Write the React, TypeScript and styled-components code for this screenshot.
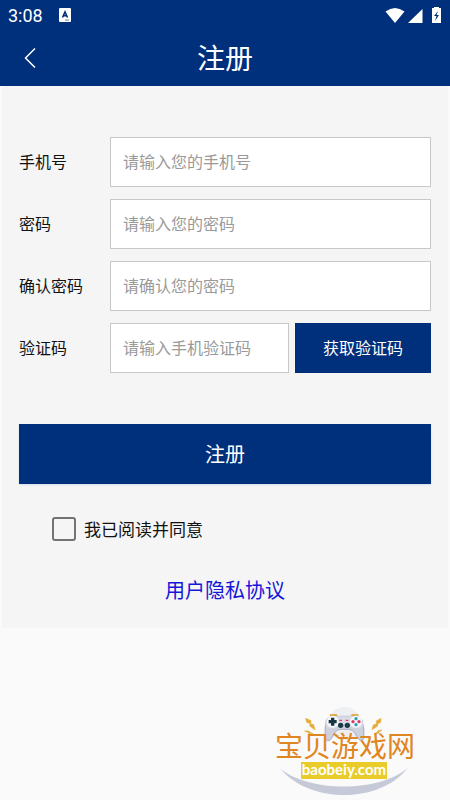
import React, { useState } from "react";
import styled, { createGlobalStyle } from "styled-components";

const navy = "#002f7b";

const GlobalStyle = createGlobalStyle`
  *, *::before, *::after { box-sizing: border-box; }
  body {
    margin: 0;
    background: #fafafa;
    color: #111;
    font-family: Roboto, "Noto Sans CJK SC", sans-serif;
  }
  button, input { font: inherit; border-radius: 0; }
`;

const Page = styled.div`
  min-height: 100vh;
  display: flex;
  flex-direction: column;
`;

const Header = styled.header`
  background: ${navy};
  color: #fff;
`;

const StatusBar = styled.div`
  display: flex;
  align-items: center;
  height: 32px;
  padding: 0 8px;
  font-size: 18px;
  line-height: 32px;
`;

const StatusApp = styled.svg`
  margin: 0 0 2px 16px;
`;

const StatusIcons = styled.svg`
  margin-left: auto;
`;

const TitleBar = styled.div`
  display: grid;
  grid-template-columns: 60px 1fr 60px;
  align-items: start;
  height: 54px;
`;

const BackButton = styled.button`
  display: flex;
  align-items: center;
  justify-content: center;
  height: 52px;
  padding: 0;
  border: 0;
  background: none;
  color: inherit;
`;

const Title = styled.h1`
  margin: 0;
  font-size: 28px;
  line-height: 56px;
  font-weight: 400;
  text-align: center;
`;

const Form = styled.form`
  display: flex;
  flex-direction: column;
  margin: 0 2px;
  padding: 50px 17px 22px;
  background: #f5f5f5;
`;

const Fields = styled.div`
  display: flex;
  flex-direction: column;
  gap: 12px;
  padding-top: 1px;
`;

const FieldRow = styled.div`
  display: flex;
  align-items: center;
`;

const Label = styled.label`
  flex: 0 0 91px;
  padding-bottom: 2px;
  font-size: 16px;
`;

const TextInput = styled.input`
  flex: 1;
  min-width: 0;
  height: 50px;
  padding: 0 12px;
  border: 1px solid #c8c8c8;
  background: #fff;
  font-size: 16px;
  outline: none;
  &::placeholder { color: #9a9a9a; opacity: 1; }
`;

const ActionButton = styled.button<{ $kind: "code" | "submit" }>`
  border: 0;
  padding: 0 0 2px;
  background: ${navy};
  color: #fff;
  ${({ $kind }) =>
    $kind === "code"
      ? "flex: 0 0 136px; height: 50px; margin-left: 6px; font-size: 16px;"
      : "height: 60px; margin-top: 51px; font-size: 20px; box-shadow: 0 1px 2px #d4dcea;"}
`;

const Agreement = styled.label`
  display: flex;
  align-items: center;
  gap: 8px;
  align-self: flex-start;
  height: 24px;
  margin: 33px 0 0 33px;
  font-size: 17px;
`;

const AgreementText = styled.span`
  padding-bottom: 2px;
`;

const CheckBox = styled.input`
  appearance: none;
  width: 24px;
  height: 24px;
  margin: 0;
  border: 2px solid #737373;
  border-radius: 3px;
  &:checked { background: ${navy}; }
`;

const PolicyLink = styled.a`
  align-self: center;
  margin-top: 35px;
  color: #1616d8;
  font-size: 20px;
  line-height: 30px;
  text-decoration: none;
`;

const Brand = styled.footer`
  display: grid;
  width: 160px;
  height: 105px;
  margin: auto 25px 0 auto;
  > * { grid-area: 1 / 1; }
`;

const BrandText = styled.div`
  display: flex;
  flex-direction: column;
  align-items: center;
  padding-top: 39px;
  color: #df8521;
`;

const BrandName = styled.span`
  font-size: 28px;
  line-height: 28px;
  font-weight: 400;
  white-space: nowrap;
`;

const BrandDomain = styled.span`
  width: 86px;
  height: 17px;
  margin-right: 2px;
  background: #e9cc29;
  color: #fff;
  font-family: Lato, "Noto Sans", sans-serif;
  font-size: 15px;
  font-weight: 700;
  line-height: 15px;
  text-align: center;
`;

const fields = [
  { id: "phone", label: "手机号", hint: "请输入您的手机号", type: "tel" },
  { id: "password", label: "密码", hint: "请输入您的密码", type: "password" },
  { id: "confirm", label: "确认密码", hint: "请确认您的密码", type: "password" },
  { id: "code", label: "验证码", hint: "请输入手机验证码", type: "text" },
];

function BrandDrawing() {
  return (
    <svg width="160" height="105" viewBox="0 0 480 315" aria-hidden="true">
      <circle cx="239" cy="86" r="50" fill="#eeeff1" />
      <path d="M46 221C130 290 340 295 428 219C385 274 312 300 240 300C166 300 93 276 46 221Z" fill="#c6c9d8" />
      <path d="M195 57h21v10h-21zM259 57h21v10h-21z" fill="#e5ad48" />
      <path d="M184 75Q193 62 216 64H260Q283 62 291 76Q300 106 296 132Q286 144 275 124Q268 105 251 103H226Q209 105 203 125Q191 144 183 134Q177 109 184 75Z" fill="#cdd0dd" stroke="#a7abbd" strokeWidth="3" />
      <path d="M184 75Q193 62 216 64H260Q283 62 291 76Q296 92 291 96Q279 105 261 97H216Q197 105 184 96Q179 87 184 75Z" fill="#d9dce7" />
      <circle cx="203" cy="80" r="18" fill="#f6f7fa" />
      <circle cx="273" cy="80" r="18" fill="#f6f7fa" />
      <path d="M198 68h10v7h7v10h-7v7h-10v-7h-7v-10h7z" fill="#173744" />
      <circle cx="273" cy="71" r="5" fill="#299fbf" />
      <circle cx="264" cy="80" r="5" fill="#d83d67" />
      <circle cx="282" cy="80" r="5" fill="#d83d67" />
      <circle cx="273" cy="89" r="5" fill="#299fbf" />
      <path d="M223 76h8M242 76h8" stroke="#df3d63" strokeWidth="4" />
      <circle cx="227" cy="91" r="8" fill="#183b48" />
      <circle cx="247" cy="91" r="8" fill="#183b48" />
      <g fill="#e5ac3b" stroke="#e5ac3b" strokeWidth="2" strokeLinejoin="round">
        <path d="M122 70L138 77L137 86L146 89L150 104L134 93L136 86L125 82Z" />
        <path d="M348 70L334 78L334 87L325 90L321 104L338 93L338 87L347 82Z" />
        <path d="M119 108L132 108L135 112L145 117L131 115L128 112Z" />
        <path d="M351 105L339 107L337 111L327 117L341 114L343 110Z" />
      </g>
    </svg>
  );
}

export default function App() {
  const [accepted, setAccepted] = useState(false);

  return (
    <Page>
      <GlobalStyle />
      <Header>
        <StatusBar>
          <span>3:08</span>
          <StatusApp width="12" height="14" viewBox="0 0 12 14" aria-hidden="true">
            <rect width="12" height="14" rx="1" fill="#fff" />
            <path d="M3.5 9.5L6 4L8.5 9.5M4.5 7.8H7.5" fill="none" stroke={navy} strokeWidth="1.6" />
            <path d="M6 12h4" stroke={navy} strokeWidth="0.6" />
          </StatusApp>
          <StatusIcons width="57" height="18" viewBox="0 0 57 18" fill="#fff" aria-hidden="true">
            <path d="M0.5 4.5Q10 -2.5 19.5 4.5L10 16Z" />
            <path d="M23 16L37.5 2V16Z" />
            <path d="M47 1h2V0h5v1h2v15h-9z" />
            <path d="M53 4L49 9h2.5l-1.5 5 4-6h-2.5z" fill={navy} />
          </StatusIcons>
        </StatusBar>
        <TitleBar>
          <BackButton type="button" aria-label="返回">
            <svg width="12" height="20" viewBox="0 0 12 20" fill="none" stroke="currentColor" strokeWidth="1.5">
              <path d="M11 0.5L1.5 10L11 19.5" />
            </svg>
          </BackButton>
          <Title>注册</Title>
        </TitleBar>
      </Header>

      <Form onSubmit={(event) => event.preventDefault()}>
        <Fields>
          {fields.map(({ id, label, hint, type }) => (
            <FieldRow key={id}>
              <Label htmlFor={id}>{label}</Label>
              <TextInput id={id} type={type} placeholder={hint} />
              {id === "code" && <ActionButton type="button" $kind="code">获取验证码</ActionButton>}
            </FieldRow>
          ))}
        </Fields>
        <ActionButton type="submit" $kind="submit">注册</ActionButton>
        <Agreement>
          <CheckBox
            type="checkbox"
            checked={accepted}
            onChange={(event) => setAccepted(event.target.checked)}
          />
          <AgreementText>我已阅读并同意</AgreementText>
        </Agreement>
        <PolicyLink href="#privacy">用户隐私协议</PolicyLink>
      </Form>

      <Brand>
        <BrandDrawing />
        <BrandText>
          <BrandName>宝贝游戏网</BrandName>
          <BrandDomain>baobeiy.com</BrandDomain>
        </BrandText>
      </Brand>
    </Page>
  );
}
